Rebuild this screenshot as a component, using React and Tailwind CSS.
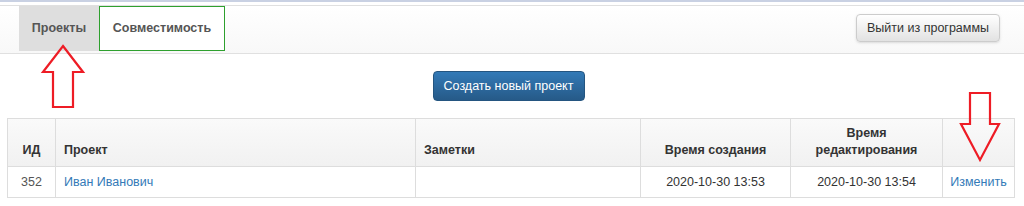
import React from 'react';

const columns = [
    { key: 'id', label: 'ИД', width: 'w-[48px]', align: 'text-center' },
    { key: 'name', label: 'Проект', width: 'w-[360px]', align: 'text-left' },
    { key: 'notes', label: 'Заметки', width: 'w-[225px]', align: 'text-left' },
    { key: 'created', label: 'Время создания', width: 'w-[150px]', align: 'text-center' },
    { key: 'edited', label: 'Время редактирования', width: 'w-[152px]', align: 'text-center' },
    { key: 'edit', label: '', width: 'w-[72px]', align: 'text-center' },
];

const projects = [
    { id: 352, name: 'Иван Иванович', notes: '', created: '2020-10-30 13:53', edited: '2020-10-30 13:54' },
];

const UpArrow = () => (
    <svg className="absolute left-[40px] top-[44px]" width="46" height="66" viewBox="0 0 46 66">
        <polygon points="23,2 43,28 33,28 33,63 13,63 13,28 3,28" fill="none" stroke="#ee1c25" strokeWidth="2.2" strokeLinejoin="miter" />
    </svg>
);

const DownArrow = () => (
    <svg className="absolute left-[958px] top-[90px]" width="44" height="74" viewBox="0 0 44 74">
        <polygon points="12,3 32,3 32,34 41,34 22,70 3,34 12,34" fill="none" stroke="#ee1c25" strokeWidth="2.2" strokeLinejoin="miter" />
    </svg>
);

const App = () => {
    return (
        <div className="relative w-[1024px] h-[206px] overflow-hidden bg-white text-[#333] text-[12.5px]" style={{ fontFamily: '"Liberation Sans", Arial, sans-serif' }}>
            <div className="h-[2px] bg-[#c9d1e3]"></div>

            <div className="mt-[3px] h-[49px] border-y border-[#e0e0e0] bg-gradient-to-b from-white to-[#f8f8f8] flex items-start justify-between pl-[19px] pr-[24px]">
                <div className="flex h-[45px]">
                    <div className="w-[80px] h-full flex items-center justify-center bg-[#dedede] text-[#555] font-bold">
                        Проекты
                    </div>
                    <div className="w-[126px] h-full flex items-center justify-center border border-[#2ea02e] bg-white text-[#555] font-bold">
                        Совместимость
                    </div>
                </div>
                <button className="mt-[8px] h-[28px] w-[144px] rounded border border-[#ccc] bg-gradient-to-b from-white to-[#e2e2e2] text-[#333] shadow-sm">
                    Выйти из программы
                </button>
            </div>

            <div className="flex justify-center pl-[7px] pr-[10px] pt-[17px]">
                <button className="ml-[-4px] h-[30px] w-[152px] rounded border border-[#245580] bg-gradient-to-b from-[#337ab7] to-[#265a88] text-white">
                    Создать новый проект
                </button>
            </div>

            <div className="pl-[7px] pt-[17px]">
                <table className="table-fixed border-collapse w-[1007px]">
                    <thead>
                        <tr className="h-[48px] bg-gradient-to-b from-[#fafafa] to-[#f1f1f1]">
                            {columns.map((col) => (
                                <th
                                    key={col.key}
                                    className={`${col.width} ${col.align} align-bottom border border-[#ddd] px-[8px] pb-[7px] font-bold leading-[17px]`}
                                >
                                    {col.key === 'edited' ? (
                                        <>
                                            Время
                                            <br />
                                            редактирования
                                        </>
                                    ) : (
                                        col.label
                                    )}
                                </th>
                            ))}
                        </tr>
                    </thead>
                    <tbody>
                        {projects.map((p) => (
                            <tr key={p.id} className="h-[31px]">
                                <td className="border border-[#ddd] px-[8px] text-center text-[#555]">{p.id}</td>
                                <td className="border border-[#ddd] px-[8px] text-[#337ab7]">{p.name}</td>
                                <td className="border border-[#ddd] px-[8px]">{p.notes}</td>
                                <td className="border border-[#ddd] px-[8px] text-center">{p.created}</td>
                                <td className="border border-[#ddd] px-[8px] text-center">{p.edited}</td>
                                <td className="border border-[#ddd] px-[4px] text-center text-[#337ab7]">Изменить</td>
                            </tr>
                        ))}
                    </tbody>
                </table>
            </div>

            <UpArrow />
            <DownArrow />
        </div>
    );
};

export default App;
